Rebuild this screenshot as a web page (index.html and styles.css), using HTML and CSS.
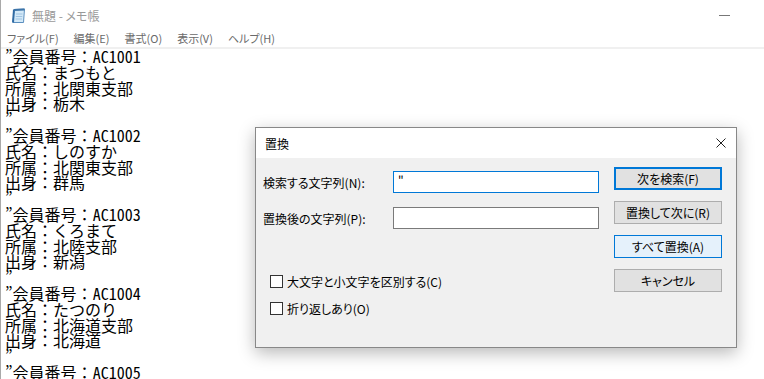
FILE: index.html
```html
<!DOCTYPE html>
<html lang="ja">
<head>
  <meta charset="UTF-8" />
  <title>無題 - メモ帳</title>
  <link rel="stylesheet" href="styles.css">
</head>
<body>

  <div class="notepad">
    <div class="np-title">
      <svg class="np-icon" viewBox="0 0 15 16" width="15" height="16">
        <path d="M3 2.5 L13.5 2 L12.5 15.5 L2 15.5 Z" fill="#d3e9f8" stroke="#5b8fbf" stroke-width="1"/>
        <path d="M3 2.5 L2 15.5" stroke="#2f6aa3" stroke-width="2"/>
        <path d="M3 2 L13.5 1.5 L13.4 3.6 L3 4 Z" fill="#3d74a8"/>
        <path d="M5 7 H11.5 M4.8 9.5 H11.3 M4.6 12 H11" stroke="#9fc3e2" stroke-width="1"/>
      </svg>
      <span class="np-caption">無題 - メモ帳</span>
      <span class="np-min"></span>
    </div>
    <div class="np-menu">
      <span class="menu-item">ファイル(F)</span>
      <span class="menu-item">編集(E)</span>
      <span class="menu-item">書式(O)</span>
      <span class="menu-item">表示(V)</span>
      <span class="menu-item">ヘルプ(H)</span>
    </div>
<pre class="np-text"><span class="hw">”</span>会員番号：<span class="hw">AC1001</span>
氏名：まつもと
所属：北関東支部
出身：栃木
<span class="hw">”</span>
<span class="hw">”</span>会員番号：<span class="hw">AC1002</span>
氏名：しのすか
所属：北関東支部
出身：群馬
<span class="hw">”</span>
<span class="hw">”</span>会員番号：<span class="hw">AC1003</span>
氏名：くろまて
所属：北陸支部
出身：新潟
<span class="hw">”</span>
<span class="hw">”</span>会員番号：<span class="hw">AC1004</span>
氏名：たつのり
所属：北海道支部
出身：北海道
<span class="hw">”</span>
<span class="hw">”</span>会員番号：<span class="hw">AC1005</span></pre>
  </div>

  <div class="dialog">
    <div class="dlg-title">
      <span>置換</span>
      <svg class="dlg-close" viewBox="0 0 10 10" width="10" height="10">
        <path d="M0.5 0.5 L9.5 9.5 M9.5 0.5 L0.5 9.5" stroke="#222" stroke-width="1"/>
      </svg>
    </div>
    <div class="dlg-body">
      <div class="dlg-fields">
        <div class="row">
          <span class="row-label">検索する文字列(N):</span>
          <div class="field active">"</div>
        </div>
        <div class="row">
          <span class="row-label">置換後の文字列(P):</span>
          <div class="field"></div>
        </div>
        <div class="checks">
          <div class="check-row"><span class="box"></span>大文字と小文字を区別する(C)</div>
          <div class="check-row"><span class="box"></span>折り返しあり(O)</div>
        </div>
      </div>
      <div class="dlg-buttons">
        <button class="btn default">次を検索(F)</button>
        <button class="btn">置換して次に(R)</button>
        <button class="btn hot">すべて置換(A)</button>
        <button class="btn">キャンセル</button>
      </div>
    </div>
  </div>

</body>
</html>
```

FILE: styles.css
```css
* {
  box-sizing: border-box;
}
body {
  margin: 0;
  width: 764px;
  height: 379px;
  overflow: hidden;
  position: relative;
  background: #fff;
  font-family: "Noto Sans CJK JP", sans-serif;
}

/* notepad window */
.notepad {
  height: 379px;
  overflow: hidden;
  border-left: 1px solid #a9a9a9;
  display: flex;
  flex-direction: column;
}
.np-title {
  flex-shrink: 0;
  height: 30px;
  display: flex;
  align-items: center;
  padding-left: 10px;
}
.np-icon {
  margin-right: 6px;
}
.np-caption {
  font-size: 12px;
  color: #9a9a9a;
  font-feature-settings: "palt";
}
.np-min {
  margin-left: auto;
  margin-right: 34px;
  width: 11px;
  height: 1px;
  background: #777;
}
.np-menu {
  flex-shrink: 0;
  height: 19px;
  display: flex;
  align-items: center;
  gap: 15px;
  padding-left: 6px;
  padding-bottom: 2px;
  font-size: 11px;
  color: #6a6a6a;
  font-feature-settings: "palt";
  border-bottom: 2px solid #f0f0f0;
}
.np-text {
  flex-shrink: 0;
  margin: 0;
  padding: 0 0 0 4px;
  font-family: "Noto Sans CJK JP", sans-serif;
  font-size: 16px;
  line-height: 15.8px;
  color: #000;
  white-space: pre;
}
.hw {
  font-feature-settings: "hwid";
}

/* replace dialog */
.dialog {
  position: absolute;
  left: 255px;
  top: 127px;
  width: 482px;
  height: 221px;
  border: 1px solid #888;
  background: #f0f0f0;
  box-shadow: 0 5px 16px rgba(0, 0, 0, 0.28);
  font-size: 12px;
  color: #000;
  font-feature-settings: "palt";
}
.dlg-title {
  height: 30px;
  background: #fff;
  display: flex;
  align-items: center;
  justify-content: space-between;
  padding: 0 10px 0 9px;
}
.dlg-body {
  display: flex;
}
.dlg-fields {
  flex: 1;
  padding: 13px 0 0 7px;
}
.row {
  display: flex;
  align-items: center;
  height: 22px;
  margin-bottom: 14px;
}
.row-label {
  width: 130px;
}
.field {
  width: 206px;
  height: 22px;
  background: #fff;
  border: 1px solid #7a7a7a;
  padding-left: 4px;
  line-height: 18px;
}
.field.active {
  border-color: #0078d7;
}
.checks {
  margin-top: 46px;
  padding-left: 7px;
}
.check-row {
  display: flex;
  align-items: center;
  height: 13px;
  margin-bottom: 14px;
}
.box {
  width: 13px;
  height: 13px;
  border: 1px solid #333;
  background: #fff;
  margin-right: 4px;
}
.dlg-buttons {
  width: 108px;
  margin: 9px 14px 0 0;
  display: flex;
  flex-direction: column;
  gap: 11px;
}
.btn {
  height: 23px;
  padding: 0;
  border: 1px solid #adadad;
  background: #e1e1e1;
  color: #000;
  font: inherit;
  font-size: 12px;
  font-feature-settings: "palt";
}
.btn.default {
  border: 2px solid #0078d7;
}
.btn.hot {
  background: #e5f1fb;
  border-color: #0078d7;
}
```
